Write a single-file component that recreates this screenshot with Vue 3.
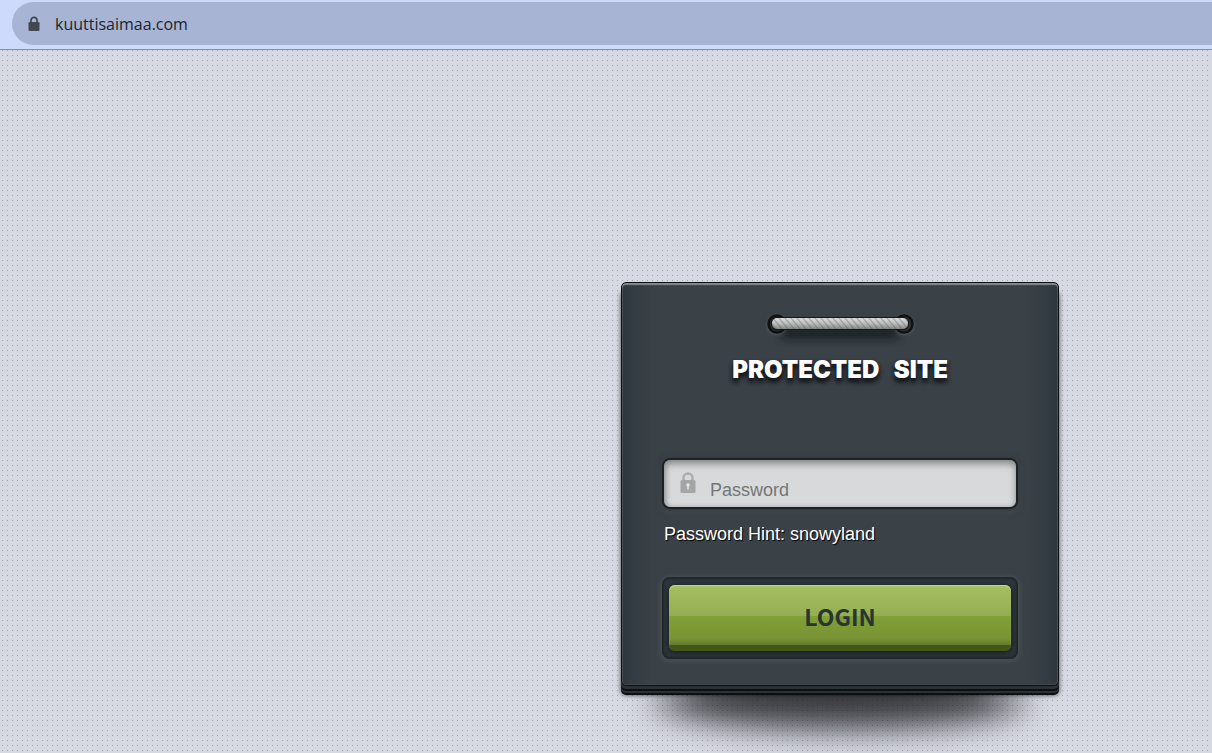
<script setup>
    import { ref } from 'vue'
    const site = ref('kuuttisaimaa.com')
    const hint = ref('snowyland')
    const password = ref('')

    function handleSubmit(){
        password.value = ''
    }
</script>

<template>
    <div class="page">
        <header class="browser-bar">
            <div class="address">
                <svg class="address-lock" viewBox="0 0 12 16" aria-hidden="true">
                    <path d="M3 7V4.400a3 3 0 0 1 6 0V7" fill="none" stroke="#42474f" stroke-width="1.700" />
                    <rect x="0.500" y="6" width="11" height="9" rx="1.300" fill="#42474f" />
                </svg>
                <span>{{ site }}</span>
            </div>
        </header>

        <main class="content">
            <form class="card" @submit.prevent="handleSubmit()">
                <svg class="rope" viewBox="0 0 170 44" aria-hidden="true">
                    <defs>
                        <filter id="soft" x="-30%" y="-100%" width="160%" height="300%">
                            <feGaussianBlur stdDeviation="5" />
                        </filter>
                        <filter id="glow" x="-30%" y="-30%" width="160%" height="160%">
                            <feGaussianBlur stdDeviation="1.500" />
                        </filter>
                        <linearGradient id="cord" x1="0" y1="0" x2="0" y2="1">
                            <stop offset="0" stop-color="#dedede" />
                            <stop offset="0.500" stop-color="#bcbebe" />
                            <stop offset="1" stop-color="#858888" />
                        </linearGradient>
                        <pattern id="twist" width="6" height="8" patternUnits="userSpaceOnUse" patternTransform="skewX(40)">
                            <rect width="2" height="8" fill="#555" opacity="0.300" />
                        </pattern>
                    </defs>
                    <rect x="26" y="21" width="118" height="12" rx="5" fill="#101619" opacity="0.800" filter="url(#soft)" />
                    <circle cx="22" cy="20" r="10" fill="#6a6f72" opacity="0.600" filter="url(#glow)" />
                    <circle cx="149" cy="20" r="10" fill="#6a6f72" opacity="0.600" filter="url(#glow)" />
                    <circle cx="22" cy="19" r="8.500" fill="#27292b" stroke="#101113" stroke-width="2.500" />
                    <circle cx="149" cy="19" r="8.500" fill="#303234" stroke="#101113" stroke-width="2.500" />
                    <rect x="16" y="12" width="138" height="13" rx="6" fill="#141719" />
                    <rect x="17" y="13" width="136" height="11" rx="5" fill="url(#cord)" />
                    <rect x="17" y="13" width="136" height="11" rx="5" fill="url(#twist)" />
                </svg>

                <h1>PROTECTED&nbsp;&nbsp; SITE</h1>

                <div class="form-group">
                    <label for="password" aria-label="Password">
                        <svg class="field-lock" viewBox="0 0 16 22" aria-hidden="true">
                            <path d="M3.500 10V6a4.500 4.500 0 0 1 9 0v4" fill="none" stroke="#acaeae" stroke-width="2.500" />
                            <rect x="0.500" y="8" width="15" height="13" rx="1.500" fill="#a4a6a6" />
                            <circle cx="8" cy="13" r="1.800" fill="#e4e5e5" />
                            <path d="M8 13v4.500" stroke="#e4e5e5" stroke-width="1.600" />
                        </svg>
                    </label>
                    <input type="password" id="password" v-model="password" placeholder="Password" required>
                </div>
                <p class="hint">Password Hint: {{ hint }}</p>

                <div class="form-actions">
                    <button class="btn-login" type="submit">LOGIN</button>
                </div>
            </form>
        </main>
    </div>
</template>

<style>
body {
    margin: 0;
}
</style>

<style scoped>
.page {
    display: flex;
    flex-direction: column;
    min-height: 100vh;
    overflow: hidden;
    box-sizing: border-box;
    background-color: #d7d9e2;
    background-image: conic-gradient(from 270deg at 1px 1px, #a3a5b2 90deg, transparent 90deg);
    background-size: 5px 5px;
    background-position: 2px 0;
    font-family: "Liberation Sans", Arial, sans-serif;
}

/* Browser address bar */
.browser-bar {
    padding: 2px 0 4px 12px;
    background-color: #cddafb;
    border-bottom: 1px solid #8089c0;
}

.address {
    display: flex;
    align-items: center;
    gap: 15px;
    height: 43px;
    padding-left: 16px;
    border-radius: 22px 0 0 22px;
    background-color: #a8b4d3;
    color: #20242d;
    font-family: "Open Sans", "Noto Sans", sans-serif;
    font-size: 16px;
}

.address-lock {
    width: 12px;
    height: 16px;
}

/* Login card */
.content {
    display: flex;
    flex: 1;
    justify-content: flex-end;
    align-items: flex-start;
    position: relative;
    z-index: 0;
    padding: 232px 153px 56px 0;
}

.card {
    position: relative;
    box-sizing: border-box;
    width: 438px;
    padding: 22px 40px 26px;
    border: 1px solid #0c1013;
    border-radius: 5px;
    background: linear-gradient(to right, #2e363d 0, #343d43 12px, #3a4147 30px, #3a4147 calc(100% - 30px), #343d43 calc(100% - 12px), #2e363d 100%);
    box-shadow:
        inset 0 2px 1px #858a8d,
        inset 1px 0 1px #444c51,
        inset -1px -1px 1px #444c51,
        0 3px 0 #2b3135,
        0 5px 0 #0c1013,
        0 7px 0 #2b3135,
        0 9px 0 #0c1013,
        0 9px 5px rgba(0, 0, 0, 0.7);
}

/* Shadow on the ground under the card */
.card::before,
.card::after {
    content: "";
    position: absolute;
    z-index: -1;
    left: 28px;
    right: 28px;
    bottom: -50px;
    height: 64px;
    border-radius: 50%;
    background-color: rgba(40, 40, 44, 0.5);
    filter: blur(14px);
}

.card::after {
    left: 60px;
    right: 60px;
    bottom: -32px;
    height: 40px;
    background-color: rgba(20, 20, 24, 0.7);
}

.rope {
    display: block;
    width: 170px;
    height: 44px;
    margin: 0 auto;
}

h1 {
    margin: 7px 0 75px;
    color: #fff;
    font-family: Inter, "Open Sans", sans-serif;
    font-size: 24px;
    font-weight: 900;
    line-height: 27px;
    text-align: center;
    text-shadow: 0 3px 4px #14181b, 0 4px 5px #14181b;
}

.form-group {
    display: flex;
    box-sizing: border-box;
    height: 51px;
    border: 2px solid #1d2226;
    border-radius: 8px;
    background-color: #d8d9da;
    box-shadow:
        inset 0 4px 7px #898b8c,
        inset 2px 0 4px #b0b2b3,
        0 0 4px 2px #333a3f,
        0 2px 4px 2px #4a5154;
}

.form-group label {
    padding: 12px 14px 0 16px;
}

.field-lock {
    display: block;
    width: 16px;
    height: 22px;
}

.form-group input {
    flex: 1;
    min-width: 0;
    padding: 14px 12px 0 0;
    border: none;
    outline: none;
    background: transparent;
    color: #333;
    font-family: inherit;
    font-size: 18px;
}

.form-group input::placeholder {
    color: #747677;
}

.hint {
    margin: 15px 2px 32px;
    color: #fff;
    font-size: 18px;
    line-height: 21px;
    text-shadow: 1px 1px 1px #000;
}

.form-actions {
    display: flex;
    padding: 8px 7px;
    border-radius: 8px;
    background-color: #30373c;
    box-shadow:
        inset 0 0 2px 2px #20272b,
        0 1px 4px 2px #4a5155;
}

.btn-login {
    flex: 1;
    height: 66px;
    padding: 0 0 5px;
    border: none;
    border-radius: 6px;
    background: linear-gradient(to bottom, #a5bf60 0, #95ae54 31px, #81a036 31px, #789335 54px, #63792d 60px, #435619 60px);
    box-shadow:
        inset 0 1px 1px #c4d49b,
        0 1px 5px 1px #171e20;
    color: #293530;
    font-family: "Noto Sans CJK SC", "Noto Sans", sans-serif;
    font-size: 23px;
    font-weight: 700;
    cursor: pointer;
}
</style>
